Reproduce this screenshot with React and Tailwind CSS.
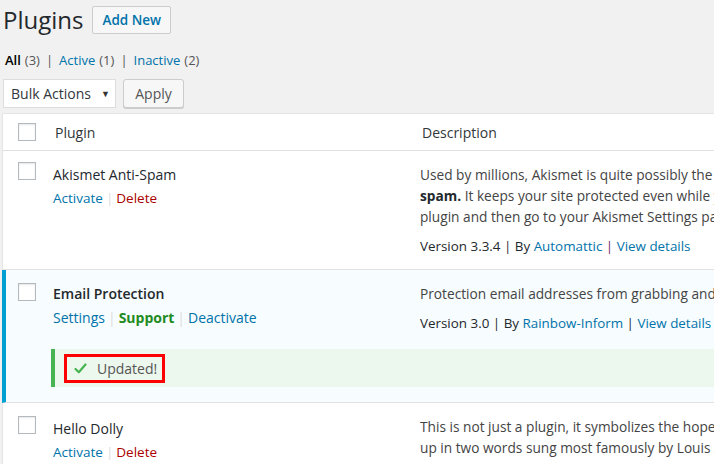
import React from "react";

function Box() {
  return <div className="w-[18px] h-[18px] border border-[#b4b9be] bg-white shadow-[inset_0_1px_2px_rgba(0,0,0,0.1)]" />;
}

function Sep({ c = "text-[#ddd]", m = "mx-[4px]" }) {
  return <span className={`${c} ${m}`}>|</span>;
}

export default function App() {
  return (
    <div className="w-[714px] h-[464px] overflow-hidden bg-[#f1f1f1] font-['Open_Sans',sans-serif] text-[13px] text-[#444]">
      <div className="w-[1100px] pl-[2px]">
        {/* Title */}
        <div className="flex items-center h-[40px] pl-[1px]">
          <h1 className="text-[24px] leading-[40px] text-[#23282d] font-normal">Plugins</h1>
          <button className="ml-[9px] h-[28px] px-[9px] border border-[#ccc] bg-[#f7f7f7] rounded-[2px] text-[13.5px] font-semibold text-[#0073aa]">
            Add New
          </button>
        </div>
        {/* subsubsub */}
        <div className="mt-[11px] h-[20px] flex items-center pl-[3px] text-[13px] text-[#555]">
          <span className="text-black font-semibold">All</span>
          <span className="ml-[4px]">(3)</span>
          <span className="mx-[6px]">|</span>
          <span className="text-[#0073aa]">Active</span>
          <span className="ml-[4px]">(1)</span>
          <span className="mx-[6px]">|</span>
          <span className="text-[#0073aa]">Inactive</span>
          <span className="ml-[4px]">(2)</span>
        </div>
        {/* bulk actions */}
        <div className="mt-[8px] flex items-center pl-[1px]">
          <div className="w-[113px] h-[29px] bg-white border border-[#ddd] flex items-center pl-[7px] text-[14px] text-[#32373c]">
            <span>Bulk Actions</span>
            <span className="ml-[10px] text-[9px] text-[#333]">▼</span>
          </div>
          <button className="ml-[7px] w-[61px] h-[29px] bg-[#f7f7f7] border border-[#ccc] rounded-[3px] shadow-[0_1px_0_#ccc] text-[14px] text-[#555]">
            Apply
          </button>
        </div>
        {/* table */}
        <div className="mt-[5px] border border-[#e5e5e5] bg-white shadow-[0_1px_1px_rgba(0,0,0,0.04)]">
          {/* header */}
          <div className="flex h-[37px] items-center border-b border-[#e1e1e1] text-[14px] text-[#32373c]">
            <div className="w-[50px] shrink-0 pl-[15px]"><Box /></div>
            <div className="w-[368px] shrink-0 pl-[2px]">Plugin</div>
            <div className="pl-[1px]">Description</div>
          </div>
          {/* Akismet */}
          <div className="flex border-b border-[#e1e1e1] h-[119px]">
            <div className="w-[50px] shrink-0 pl-[15px] pt-[11px]"><Box /></div>
            <div className="w-[367px] shrink-0 pt-[13px]">
              <div className="text-[14px] leading-[21px] text-[#23282d]">Akismet Anti-Spam</div>
              <div className="mt-[3px] leading-[20px] text-[13.5px]">
                <span className="text-[#0073aa]">Activate</span>
                <Sep m="mx-[3px]" />
                <span className="text-[#a00]">Delete</span>
              </div>
            </div>
            <div className="pt-[13px] whitespace-nowrap text-[13.7px]">
              <div className="leading-[21px]">
                Used by millions, Akismet is quite possibly the best way in the world to <b className="text-[#23282d]">protect your blog from</b>
                <br />
                <b className="text-[#23282d]">spam.</b> It keeps your site protected even while you sleep. To get started: activate the Akismet
                <br />
                plugin and then go to your Akismet Settings page to set up your API key.
              </div>
              <div className="mt-[9px] leading-[21px] text-[#23282d] text-[13.4px]">
                Version 3.3.4 | By <span className="text-[#0073aa]">Automattic</span> <span className="text-[#72236b]">|</span>{" "}
                <span className="text-[#0073aa]">View details</span>
              </div>
            </div>
          </div>
          {/* Email Protection (active) */}
          <div className="bg-[#f7fcfe] border-l-[4px] border-[#00a0d2] -ml-px border-b border-b-[#e1e1e1]">
            <div className="flex h-[75px]">
              <div className="w-[47px] shrink-0 pl-[12px] pt-[13px]"><Box /></div>
              <div className="w-[367px] shrink-0 pt-[13px]">
                <div className="text-[14px] leading-[21px] font-semibold text-[#23282d]">Email Protection</div>
                <div className="mt-[4px] leading-[20px] text-[14px]">
                  <span className="text-[#0073aa]">Settings</span>
                  <Sep m="mx-[3px]" />
                  <span className="text-[#228b22] font-bold">Support</span>
                  <Sep m="mx-[3px]" />
                  <span className="text-[#0073aa]">Deactivate</span>
                </div>
              </div>
              <div className="pt-[13px] whitespace-nowrap text-[13.7px]">
                <div className="leading-[21px]">
                  Protection email addresses from grabbing and spam bots. Encodes emails in posts, comments and widgets.
                </div>
                <div className="mt-[9px] leading-[21px] text-[#23282d] text-[13.4px]">
                  Version 3.0 | By <span className="text-[#0073aa]">Rainbow-Inform</span> |{" "}
                  <span className="text-[#0073aa]">View details</span>
                </div>
              </div>
            </div>
            <div className="pt-[4px] pb-[15px] pl-[45px]">
              <div className="h-[38px] bg-[#ecf7ed] border-l-[4px] border-[#46b450] flex items-center pl-[9px]">
                <div className="h-[29px] w-[101px] border-[3px] border-[#ff0000] flex items-center pl-[7px]">
                  <svg width="13" height="11" viewBox="0 0 13 11" className="shrink-0">
                    <path d="M1.5 6 L4.8 9.3 L11.5 1.5" stroke="#46b450" strokeWidth="2.2" fill="none" strokeLinecap="round" strokeLinejoin="round" />
                  </svg>
                  <span className="ml-[10px] text-[14px] text-[#555]">Updated!</span>
                </div>
              </div>
            </div>
          </div>
          {/* Hello Dolly */}
          <div className="flex h-[80px]">
            <div className="w-[50px] shrink-0 pl-[15px] pt-[13px]"><Box /></div>
            <div className="w-[367px] shrink-0 pt-[15px]">
              <div className="text-[14px] leading-[21px] text-[#23282d]">Hello Dolly</div>
              <div className="mt-[3px] leading-[20px] text-[13.5px]">
                <span className="text-[#0073aa]">Activate</span>
                <Sep m="mx-[3px]" />
                <span className="text-[#a00]">Delete</span>
              </div>
            </div>
            <div className="pt-[13px] whitespace-nowrap text-[13.7px]">
              <div className="leading-[21px]">
                This is not just a plugin, it symbolizes the hope and enthusiasm of an entire generation summed
                <br />
                up in two words sung most famously by Louis Armstrong: Hello, Dolly.
              </div>
            </div>
          </div>
        </div>
      </div>
    </div>
  );
}
